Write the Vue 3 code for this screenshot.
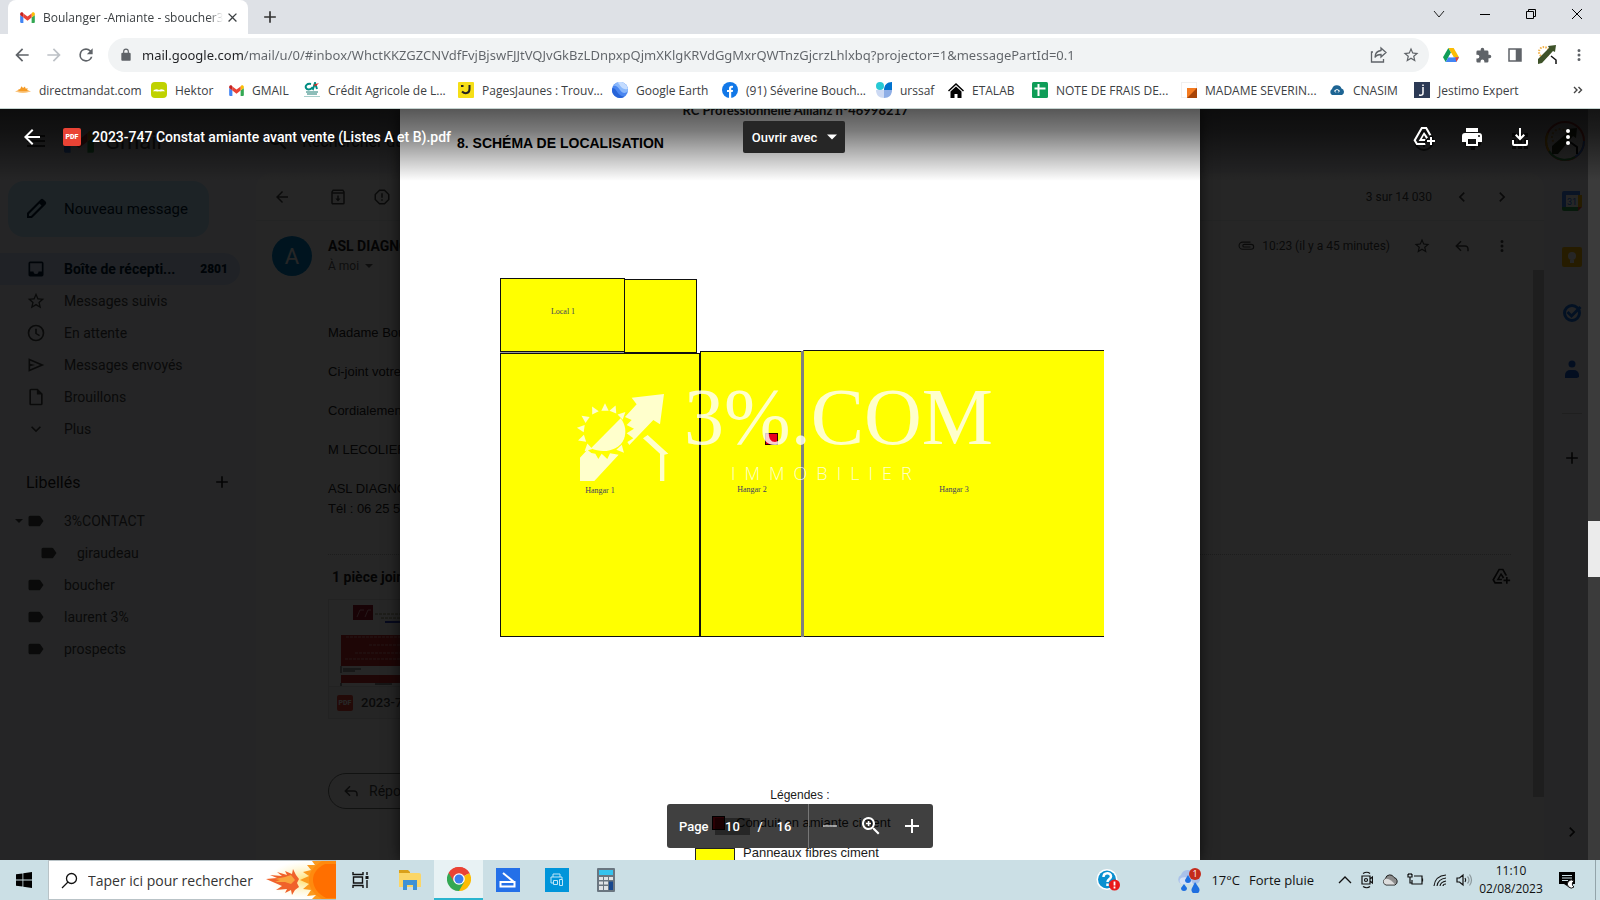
<script setup>
import { h, ref } from 'vue'

const paths = {
  back: 'M20 11H7.83l5.59-5.59L12 4l-8 8 8 8 1.41-1.41L7.83 13H20v-2z',
  forward: 'M12 4l-1.41 1.41L16.17 11H4v2h12.17l-5.58 5.59L12 20l8-8z',
  reload: 'M17.65 6.35A7.96 7.96 0 0 0 12 4a8 8 0 1 0 7.73 10h-2.08A6 6 0 1 1 12 6c1.66 0 3.14.69 4.22 1.78L13 11h7V4l-2.35 2.35z',
  lock: 'M18 8h-1V6A5 5 0 0 0 7 6v2H6a2 2 0 0 0-2 2v10c0 1.1.9 2 2 2h12a2 2 0 0 0 2-2V10a2 2 0 0 0-2-2zM9 6a3 3 0 0 1 6 0v2H9V6z',
  star: 'M22 9.24l-7.19-.62L12 2 9.19 8.63 2 9.24l5.46 4.73L5.82 21 12 17.27 18.18 21l-1.63-7.03L22 9.24zM12 15.4l-3.76 2.27 1-4.28-3.32-2.88 4.38-.38L12 6.1l1.71 4.04 4.38.38-3.32 2.88 1 4.28L12 15.4z',
  puzzle: 'M20.5 11H19V7a2 2 0 0 0-2-2h-4V3.500a2.500 2.500 0 0 0-5 0V5H4a2 2 0 0 0-2 2v3.800h1.500a2.700 2.700 0 0 1 0 5.400H2V20c0 1.100.9 2 2 2h3.800v-1.500a2.700 2.700 0 0 1 5.400 0V22H17a2 2 0 0 0 2-2v-4h1.500a2.500 2.500 0 0 0 0-5z',
  dots: 'M12 8a2 2 0 1 0 0-4 2 2 0 0 0 0 4zm0 2a2 2 0 1 0 0 4 2 2 0 0 0 0-4zm0 6a2 2 0 1 0 0 4 2 2 0 0 0 0-4z',
  close: 'M19 6.41L17.59 5 12 10.59 6.41 5 5 6.41 10.59 12 5 17.59 6.41 19 12 13.41 17.59 19 19 17.59 13.41 12z',
  plus: 'M19 13h-6v6h-2v-6H5v-2h6V5h2v6h6v2z',
  minus: 'M19 13H5v-2h14v2z',
  side: 'M3 3v18h18V3H3zm10 16H5V5h8v14z',
  print: 'M19 8H5a3 3 0 0 0-3 3v6h4v4h12v-4h4v-6a3 3 0 0 0-3-3zm-3 11H8v-5h8v5zm3-7a1 1 0 1 1 0-2 1 1 0 0 1 0 2zM18 3H6v4h12V3z',
  download: 'M13 3v8.600l2.600-2.600L17 10.400l-5 5-5-5L8.400 9l2.600 2.600V3h2zM4 15h2v4h12v-4h2v4a2 2 0 0 1-2 2H6a2 2 0 0 1-2-2v-4z',
  driveAdd: 'M9.200 2h5.600l4.700 8.200c-.8 0-1.500.2-2.200.4L13.600 4h-3.200L3.900 15.300 5.500 18H13c.1.700.3 1.400.6 2H4.300L1.500 15.300 9.200 2zM12 7l4 5.500c-.7.4-1.200.9-1.700 1.500L12 10.300 9.900 14h3.700c-.4.600-.6 1.300-.7 2H6.700L12 7zM20 12v3h3v2h-3v3h-2v-3h-3v-2h3v-3h2z',
  caret: 'M6 9l6 6 6-6z',
  pencil: 'M19.400 2.400a2 2 0 0 0-2.800 0L3 16v5h5L21.600 7.400a2 2 0 0 0 0-2.800l-2.200-2.200zM7 19H5v-2L15.500 6.500l2 2L7 19z',
  inbox: 'M19 3H5a2 2 0 0 0-2 2v14c0 1.100.9 2 2 2h14a2 2 0 0 0 2-2V5a2 2 0 0 0-2-2zm0 12h-4a3 3 0 0 1-6 0H5V5h14v10z',
  clock: 'M12 2a10 10 0 1 0 0 20 10 10 0 0 0 0-20zm0 18a8 8 0 1 1 0-16 8 8 0 0 1 0 16zm1-13h-2v6l4.800 3 .9-1.500L13 12.200V7z',
  send: 'M3 4v16l19-8L3 4zm2 3l11.850 5L5 17v-3.500l6-1.500-6-1.500V7z',
  file: 'M14 2H6a2 2 0 0 0-2 2v16c0 1.100.9 2 2 2h12a2 2 0 0 0 2-2V8l-6-6zm4 18H6V4h7v5h5v11z',
  down: 'M7.410 8.590L12 13.170l4.590-4.580L18 10l-6 6-6-6z',
  left: 'M15.410 7.410L14 6l-6 6 6 6 1.410-1.410L10.830 12z',
  right: 'M10 6L8.590 7.410 13.170 12l-4.580 4.590L10 18l6-6z',
  label: 'M16 5H4a2 2 0 0 0-2 2v10c0 1.100.9 2 2 2h12c.7 0 1.300-.3 1.600-.8L22 12l-4.400-6.200C17.300 5.300 16.700 5 16 5z',
  archive: 'M19 2H5L3 5v15c0 1.100.9 2 2 2h14a2 2 0 0 0 2-2V5l-2-3zM6 4h12l1 1.500H5L6 4zM5 20V7.500h14V20H5zm8-10h-2v4H8.500l3.500 4 3.500-4H13v-4z',
  spam: 'M8.300 2L2 8.300v7.400L8.300 22h7.400l6.300-6.300V8.300L15.700 2H8.300zM20 14.900L14.900 20H9.100L4 14.900V9.100L9.100 4h5.800L20 9.100v5.800zM11 7h2v6h-2V7zm0 8h2v2h-2v-2z',
  reply: 'M10 5L3 12l7 7 1.400-1.400L6.800 13H16c2 0 3 1.200 3 3v3h2v-3c0-3-2-5-5-5H6.800l4.600-4.600L10 5z',
  clip: 'M18 6H7.500a5.500 5.500 0 0 0 0 11H19a4 4 0 0 0 0-8H9.500a2.500 2.500 0 0 0 0 5H18v-1.500H9.500a1 1 0 0 1 0-2H19a2.500 2.500 0 0 1 0 5H7.500a4 4 0 0 1 0-8H18V6z',
  menu: 'M3 18h18v-2H3v2zm0-5h18v-2H3v2zm0-7v2h18V6H3z',
  search: 'M15.500 14h-.8l-.3-.3A6.500 6.500 0 1 0 13.700 14.400l.3.300v.8l5 5 1.500-1.500-5-5zm-6 0a4.500 4.500 0 1 1 0-9 4.500 4.500 0 0 1 0 9z',
  zoom: 'M15.500 14h-.8l-.3-.3A6.500 6.500 0 1 0 13.700 14.400l.3.300v.8l5 5 1.500-1.500-5-5zm-6 0a4.500 4.500 0 1 1 0-9 4.500 4.500 0 0 1 0 9zM10.300 7H8.700v1.700H7v1.600h1.700V12h1.600v-1.700H12V8.700h-1.700V7z',
  help: 'M12 2a10 10 0 1 0 0 20 10 10 0 0 0 0-20zm0 18a8 8 0 1 1 0-16 8 8 0 0 1 0 16zM11 16h2v2h-2zM12 6a4 4 0 0 0-4 4h2a2 2 0 1 1 4 0c0 2-3 2-3 5h2c0-2 3-2.500 3-5a4 4 0 0 0-4-4z',
  apps: 'M4 4h4v4H4zM10 4h4v4h-4zM16 4h4v4h-4zM4 10h4v4H4zM10 10h4v4h-4zM16 10h4v4h-4zM4 16h4v4H4zM10 16h4v4h-4zM16 16h4v4h-4z',
  gear: 'M19.400 13v-2l2-1.600-2-3.500-2.500 1a7 7 0 0 0-1.700-1L14.800 3h-4l-.5 2.900c-.6.2-1.200.6-1.700 1l-2.500-1-2 3.500L6.200 11v2l-2.100 1.600 2 3.500 2.500-1c.5.400 1.100.8 1.700 1l.5 2.900h4l.4-2.900c.6-.2 1.200-.6 1.700-1l2.500 1 2-3.500-2-1.600zM12.800 15.500a3.500 3.500 0 1 1 0-7 3.500 3.500 0 0 1 0 7z'
}
const Ico = (p) =>
  h('svg', { viewBox: '0 0 24 24', width: p.s, height: p.s, fill: 'currentColor', 'aria-hidden': 'true' }, [
    h('path', { d: paths[p.n] })
  ])
Ico.props = ['n', 's']

const GmailLogo = (p) =>
  h('svg', { viewBox: '0 0 32 24', width: p.s, height: Math.round(p.s * 0.75), 'aria-hidden': 'true' }, [
    h('path', { fill: '#4285f4', d: 'M2 24h5V12L0 6.500V22c0 1.100.9 2 2 2z' }),
    h('path', { fill: '#34a853', d: 'M25 24h5a2 2 0 0 0 2-2V6.500L25 12z' }),
    h('path', { fill: '#fbbc04', d: 'M25 3v9l7-5.500V4c0-3.500-4-4.500-6-2.500z' }),
    h('path', { fill: '#ea4335', d: 'M7 12V3l9 7 9-7v9l-9 7z' }),
    h('path', { fill: '#c5221f', d: 'M0 4v2.500L7 12V3L6 1.500C4-.5 0 .5 0 4z' })
  ])
GmailLogo.props = ['s']

const url = ref('mail.google.com/mail/u/0/#inbox/WhctKKZGZCNVdfFvjBjswFJJtVQJvGkBzLDnpxpQjmXKlgKRVdGgMxrQWTnzGjcrzLhlxbq?projector=1&messagePartId=0.1')
const pageNumber = ref('10')
const taskSearch = ref('')

const bookmarks = [
  { t: 'directmandat.com', k: 'sun' }, { t: 'Hektor', k: 'hektor' }, { t: 'GMAIL', k: 'gmail' },
  { t: 'Crédit Agricole de L...', k: 'ca' }, { t: 'PagesJaunes : Trouv...', k: 'pj' }, { t: 'Google Earth', k: 'earth' },
  { t: '(91) Séverine Bouch...', k: 'fb' }, { t: 'urssaf', k: 'urssaf' }, { t: 'ETALAB', k: 'house' },
  { t: 'NOTE DE FRAIS DE...', k: 'sheet' }, { t: 'MADAME SEVERIN...', k: 'orange' }, { t: 'CNASIM', k: 'cnasim' },
  { t: 'Jestimo Expert', k: 'jestimo' }
]
const folders = [
  { t: 'Boîte de récepti...', i: 'inbox', n: '2801' }, { t: 'Messages suivis', i: 'star' }, { t: 'En attente', i: 'clock' },
  { t: 'Messages envoyés', i: 'send' }, { t: 'Brouillons', i: 'file' }, { t: 'Plus', i: 'down' }
]
const labels = [
  { t: '3%CONTACT', open: true }, { t: 'giraudeau', sub: true }, { t: 'boucher' }, { t: 'laurent 3%' }, { t: 'prospects' }
]
const rays = [-134, -108, -82, -56, -27, 0, 22, 46, 138]
</script>

<template>
  <div class="screen">
    <header class="browser">
      <div class="tabs">
        <div class="tab">
          <GmailLogo s="15" />
          <span class="tab-title">Boulanger -Amiante - sboucher3p</span>
          <button class="plain" aria-label="Fermer l'onglet"><Ico n="close" s="15" /></button>
        </div>
        <button class="plain new-tab" aria-label="Nouvel onglet"><Ico n="plus" s="20" /></button>
        <div class="win">
          <button class="plain" aria-label="Onglets"><svg width="12" height="12" viewBox="0 0 12 12"><path d="M1 3l5 6 5-6" fill="none" stroke="#222" /></svg></button>
          <button class="plain" aria-label="Réduire"><svg width="12" height="12" viewBox="0 0 12 12"><path d="M1 6.500h10" stroke="#000" /></svg></button>
          <button class="plain" aria-label="Restaurer"><svg width="12" height="12" viewBox="0 0 12 12"><path d="M1.500 3.500h7v7h-7zM3.500 3.500v-2h7v7h-2" fill="none" stroke="#000" /></svg></button>
          <button class="plain" aria-label="Fermer"><svg width="12" height="12" viewBox="0 0 12 12"><path d="M1 1l10 10M11 1L1 11" stroke="#000" /></svg></button>
        </div>
      </div>
      <div class="nav">
        <button class="plain" aria-label="Précédent"><Ico n="back" s="20" /></button>
        <button class="plain off" aria-label="Suivant"><Ico n="forward" s="20" /></button>
        <button class="plain" aria-label="Actualiser"><Ico n="reload" s="20" /></button>
        <div class="omni">
          <Ico n="lock" s="14" />
          <input v-model="url" class="url" type="text" aria-label="Adresse" spellcheck="false" />
          <button class="plain" aria-label="Partager"><svg width="18" height="18" viewBox="0 0 18 18" fill="none" stroke="#5f6368" stroke-width="1.300"><path d="M3 6H1.500v10h12v-3" /><path d="M11 2l5 4.500L11 11V8.500c-3 0-5 1-6 3 0-4 2-6.500 6-7z" /></svg></button>
          <button class="plain" aria-label="Favori"><Ico n="star" s="18" /></button>
        </div>
        <div class="ext">
          <button class="plain" aria-label="Drive"><svg width="16" height="14" viewBox="0 0 30 26"><path d="M10 0h10l10 17H20z" fill="#fbbc04" /><path d="M10 0L0 17l5 9 10-17z" fill="#0f9d58" /><path d="M10 17h20l-5 9H5z" fill="#4285f4" /><path d="M23 17h7l-5 9z" fill="#ea4335" /><path d="M15 9l5 8H10z" fill="#fff" /></svg></button>
          <button class="plain" aria-label="Extensions"><Ico n="puzzle" s="17" /></button>
          <button class="plain" aria-label="Panneau latéral"><Ico n="side" s="18" /></button>
          <button class="plain" aria-label="Profil"><svg width="20" height="20" viewBox="0 0 20 20"><circle cx="7" cy="7" r="5" fill="none" stroke="#f2b24a" stroke-width="2" stroke-dasharray="1.500 1.200" /><path d="M1 19v-5L12 3l-1-2 8-1-1 7-2-1L5 18z" fill="#3e5229" /><path d="M14 11l5 4v4" fill="none" stroke="#111" stroke-width="1.500" /></svg></button>
          <button class="plain" aria-label="Menu"><Ico n="dots" s="18" /></button>
        </div>
      </div>
      <nav class="marks" aria-label="Favoris">
        <a v-for="b in bookmarks" :key="b.t" href="#" class="mark">
          <GmailLogo v-if="b.k === 'gmail'" s="15" />
          <svg v-else width="16" height="16" viewBox="0 0 16 16" aria-hidden="true">
            <g v-if="b.k === 'sun'" fill="#f59a23"><path d="M0 9.500l4-1.500-1-1 2 .3 1.500-3L8 6l2-1.500.5 2L13 6.500l-1 1.500 4 1.500-8 .3z" /><path d="M2 10.500l6-1 6 1-6 .6z" fill="#fbc77d" /></g>
            <g v-else-if="b.k === 'hektor'"><rect width="16" height="16" rx="4" fill="#bfd200" /><path d="M2 9.500C3 7 6 6.500 8 8c2-1.500 5-1 6 1.500-2-.5-4 .5-6-.3-2 .8-4-.2-6 .3z" fill="#fff" /></g>
            <g v-else-if="b.k === 'ca'"><path d="M7 2C3 1 1 4 2 6s4 2 6 0l1 1 2-6 2 6" fill="none" stroke="#008c82" stroke-width="2" /><path d="M9 3l6-2-3 3z" fill="#e2231a" /><path d="M2 10h12M3 12h10" stroke="#1c7c74" /><path d="M0 14.500h16" stroke="#a9cfcc" /></g>
            <g v-else-if="b.k === 'pj'"><rect width="16" height="16" rx="1" fill="#f6df17" /><path d="M3 4h2.500M11.500 3v4c0 5-5 5-7.500 2.500" fill="none" stroke="#222" stroke-width="2" /></g>
            <g v-else-if="b.k === 'earth'"><circle cx="8" cy="8" r="8" fill="#4a86f0" /><path d="M1 4C4 3 6 5 8 8s5 4 7.800 1.500A8 8 0 0 0 1 4z" fill="#8ab8fb" /><path d="M5 .6C8 2 8 5 11 6.500s4 .5 5 0A8 8 0 0 0 5 .6z" fill="#c4dcff" /><path d="M.3 6c3 0 4 3 6 5.500S12 15 13 14.200A8 8 0 0 1 .3 6z" fill="#2764d8" /></g>
            <g v-else-if="b.k === 'fb'"><circle cx="8" cy="8" r="8" fill="#1278e8" /><path d="M7 16v-6H5V8h2V6.500C7 4.500 8.300 3.500 11 4v1.800c-1.400-.2-1.800.2-1.800 1V8h1.900l-.4 2H9.200v6z" fill="#fff" /></g>
            <g v-else-if="b.k === 'urssaf'"><circle cx="4" cy="4" r="4" fill="#27c9d4" /><path d="M16 0v8H8c0-5 3-8 8-8z" fill="#0072ce" /><path d="M0 8h8v8c-5 0-8-3-8-8z" fill="#ccd9f3" /><path d="M8 8h8c0 5-3 8-8 8z" fill="#8eaee6" /></g>
            <g v-else-if="b.k === 'house'"><path d="M0 8.500L8 1l8 7.500-1 1L8 3 1 9.500z" /><path d="M2.500 9.500L8 4.500l5.500 5V16h-4v-4h-3v4h-4z" /></g>
            <g v-else-if="b.k === 'sheet'"><rect width="16" height="16" rx="1.500" fill="#0f9d58" /><path d="M6.500 2v12M2.500 6.500h11" stroke="#fff" stroke-width="2" /></g>
            <g v-else-if="b.k === 'orange'"><rect x=".5" y=".5" width="15" height="15" fill="#fff" stroke="#f0f0f0" /><path d="M6 6h10v10H6z" fill="#f47b20" /><path d="M16 6v10H6z" fill="#a84407" /></g>
            <g v-else-if="b.k === 'cnasim'"><path d="M3 13a3.500 3.500 0 0 1 0-6 5 5 0 0 1 9.500-.5A3.500 3.500 0 0 1 13 13z" fill="#1d6493" /><path d="M5 9c2-2.500 4-2.500 6 0-2 2.500-4 2.500-6 0z" fill="#fff" /><circle cx="8" cy="9.500" r="1.500" fill="#1d6493" /></g>
            <g v-else><rect width="16" height="16" fill="#2c3a55" /><path d="M9 5v6c0 2-1 2.500-4 2M9 2.500v1.500" fill="none" stroke="#fff" stroke-width="1.500" /></g>
          </svg>
          <span>{{ b.t }}</span>
        </a>
        <button class="plain more" aria-label="Autres favoris"><svg width="10" height="8" viewBox="0 0 10 8"><path d="M1 1l3 3-3 3M5.500 1l3 3-3 3" fill="none" stroke="#444" stroke-width="1.400" /></svg></button>
      </nav>
    </header>

    <main class="content">
      <div class="gmail">
        <div class="ghead">
          <span class="burger"><Ico n="menu" s="24" /></span>
          <GmailLogo s="30" />
          <span class="gname">Gmail</span>
          <div class="gsearch"><Ico n="search" s="24" /><span>Rechercher da</span></div>
          <span class="gtools"><Ico n="help" s="24" /><Ico n="gear" s="24" /><Ico n="apps" s="24" /></span>
          <svg class="gavatar" width="40" height="40" viewBox="0 0 40 40"><circle cx="20" cy="20" r="19" fill="#fff" stroke="#ea4335" stroke-width="2" /><path d="M39 20a19 19 0 0 1-9 16" fill="none" stroke="#4285f4" stroke-width="2" /><path d="M30 36A19 19 0 0 1 4 30" fill="none" stroke="#34a853" stroke-width="2" /><path d="M4 30A19 19 0 0 1 3 12" fill="none" stroke="#fbbc04" stroke-width="2" /><circle cx="15" cy="16" r="8" fill="none" stroke="#f2b24a" stroke-width="2" stroke-dasharray="2" /><path d="M7 33v-8L23 11l-2-3 11-1-1 10-3-2-15 18z" fill="#30401f" /><path d="M25 21l7 5v7" fill="none" stroke="#111" stroke-width="2" /></svg>
        </div>
        <div class="gbody">
          <aside class="side">
            <button class="plain compose"><Ico n="pencil" s="24" />Nouveau message</button>
            <a v-for="(f, i) in folders" :key="f.t" href="#" class="folder" :class="{ on: i === 0 }">
              <Ico :n="f.i" s="20" /><span>{{ f.t }}</span><b v-if="f.n">{{ f.n }}</b>
            </a>
            <div class="ltitle"><span>Libellés</span><Ico n="plus" s="20" /></div>
            <a v-for="l in labels" :key="l.t" href="#" class="folder lab" :class="{ sub: l.sub }">
              <span class="arrow"><Ico v-if="l.open" n="caret" s="16" /></span><Ico n="label" s="18" /><span>{{ l.t }}</span>
            </a>
          </aside>
          <section class="mail">
            <div class="mtools">
              <Ico n="back" s="18" /><Ico n="archive" s="18" class="arch" /><Ico n="spam" s="18" />
              <span class="grow"></span>
              <span class="count">3 sur 14 030</span><Ico n="left" s="20" /><Ico n="right" s="20" />
            </div>
            <div class="mbody">
              <article class="msg">
                <div class="mhead">
                  <span class="av">A</span>
                  <div class="from"><b>ASL DIAGNO</b><span>À moi <Ico n="caret" s="16" /></span></div>
                  <div class="meta"><Ico n="clip" s="18" /><span>10:23 (il y a 45 minutes)</span><Ico n="star" s="18" /><Ico n="reply" s="18" /><Ico n="dots" s="18" /></div>
                </div>
                <div class="text">
                  <p>Madame Boulan</p><p>Ci-joint votre</p><p>Cordialement</p><p>M LECOLIER</p><p>ASL DIAGNO<br />Tél : 06 25 5</p>
                </div>
                <div class="pj"><b>1 pièce jointe</b><Ico n="driveAdd" s="20" /></div>
                <div class="card">
                  <svg width="180" height="86" viewBox="0 0 180 86"><rect x="24" y="5" width="20" height="15" fill="#a3172c" /><path d="M28 17l3-7h4M36 17l3-7h3" stroke="#e9a0a8" fill="none" /><path d="M46 14h30M52 18h24" stroke="#8a8a60" stroke-dasharray="3 1" /><path d="M56 22h20" stroke="#2b3cc0" stroke-width="2" /><rect x="12" y="35" width="160" height="31" fill="#c92b2b" /><path d="M17 37h60M40 45h37M26 53h50M16 59h60" stroke="#e88f8f" stroke-dasharray="3 1" /><path d="M12 66v7M14 69h18M14 71h12" stroke="#444" /><rect x="12" y="75" width="160" height="8" fill="#c92b2b" /><path d="M12 83v3M46 84h17" stroke="#222" /></svg>
                  <div class="cname"><i class="pdf">PDF</i><span>2023-7</span></div>
                </div>
                <button class="plain answer"><Ico n="reply" s="18" />Répondre</button>
              </article>
              <div class="mscroll"></div>
            </div>
          </section>
          <aside class="rail">
            <svg width="20" height="20" viewBox="0 0 20 20"><path d="M0 2a2 2 0 0 1 2-2h16v4H4v12H0z" fill="#4285f4" /><path d="M16 4h4v12h-4z" fill="#fbbc04" /><path d="M0 16h16v4H2a2 2 0 0 1-2-2z" fill="#34a853" /><path d="M16 16h4l-4 4z" fill="#ea4335" /><path d="M4 4h12v12H4z" fill="#fff" /><text x="10" y="14" text-anchor="middle" font-size="9" fill="#1a73e8">31</text></svg>
            <svg width="20" height="20" viewBox="0 0 20 20"><rect width="20" height="20" rx="2" fill="#fbbc04" /><circle cx="10" cy="9" r="4" fill="#fff" /><path d="M8 13h4v3H8z" fill="#fff" /></svg>
            <svg width="20" height="20" viewBox="0 0 20 20"><circle cx="10" cy="10" r="7.500" fill="none" stroke="#1a73e8" stroke-width="3" /><path d="M5.500 9l4 4L18.500 4" fill="none" stroke="#1a73e8" stroke-width="3" /></svg>
            <svg width="20" height="20" viewBox="0 0 20 20"><circle cx="10" cy="5" r="3.500" fill="#1a5fd8" /><path d="M3 19v-3a5 5 0 0 1 5-5h4a5 5 0 0 1 5 5v2l-2 1z" fill="#1a5fd8" /></svg>
            <span class="sep"></span>
            <Ico n="plus" s="20" />
            <span class="grow"></span>
            <Ico n="right" s="20" />
          </aside>
        </div>
      </div>

      <div class="viewer">
        <article class="page">
          <p class="rc">RC Professionnelle Allianz n°46998217</p>
          <h1 class="h8">8. SCHÉMA DE LOCALISATION</h1>
          <svg class="plan" viewBox="0 0 800 634" role="img" aria-label="Schéma de localisation">
            <g fill="#ff0" stroke="#111" stroke-width="1">
              <rect x="100.500" y="126.500" width="124" height="73" /><rect x="224.500" y="127.500" width="72" height="73" />
              <rect x="100.500" y="201.500" width="199" height="283" /><rect x="300.500" y="199.500" width="101" height="285" />
              <path d="M704 198.500H403.500v286H704" />
            </g>
            <path d="M402.500 199v286" stroke="#808080" stroke-width="3" />
            <path d="M100 200.500h124" stroke="#999" />
            <rect x="365.500" y="281.500" width="12" height="11" fill="#e8001c" stroke="#300" />
            <g class="rooms"><text x="163" y="162">Local 1</text><text x="200" y="341">Hangar 1</text><text x="352" y="340">Hangar 2</text><text x="554" y="340">Hangar 3</text></g>
            <g fill="#fff" fill-opacity=".8">
              <g transform="translate(170 233) scale(.3333)">
                <path d="M30 288V218l22-24 12 10 12 2 9 16 10-16 17 16 8-17 26 4L73 288z" />
                <path d="M63 190L152 100c14 18 18 40 10 62-14 34-62 46-99 28z" />
                <path d="M165 96l35-38-15-20 97-11-12 91-20-13-72 75-6-9 18-11-20-15 22-14-22-11 15-15z" />
                <path d="M219 160l14-10 62 56-12 3v79h-13v-82z" />
                <path v-for="a in rays" :key="a" d="M94 77l11-22 11 22z" :transform="`rotate(${a} 105 140)`" />
              </g>
              <text class="brand" x="284" y="292">3%.COM</text>
              <text class="immo" x="331" y="328">IMMOBILIER</text>
            </g>
          </svg>
          <p class="leg">Légendes :</p>
          <p class="key k1"><i></i>Conduit en amiante ciment</p>
          <p class="key k2"><i></i>Panneaux fibres ciment</p>
        </article>
        <div class="vscroll"><span></span></div>
      </div>

      <div class="vhead">
        <button class="plain" aria-label="Retour"><Ico n="back" s="24" /></button>
        <i class="pdf big">PDF</i>
        <span class="fname">2023-747 Constat amiante avant vente (Listes A et B).pdf</span>
        <span class="vicons">
          <button class="plain" aria-label="Ajouter à Drive"><Ico n="driveAdd" s="24" /></button>
          <button class="plain" aria-label="Imprimer"><Ico n="print" s="24" /></button>
          <button class="plain" aria-label="Télécharger"><Ico n="download" s="24" /></button>
          <button class="plain" aria-label="Autres actions"><Ico n="dots" s="24" /></button>
        </span>
      </div>
      <button class="plain open">Ouvrir avec<Ico n="caret" s="20" /></button>
      <div class="pager">
        <label for="pg">Page</label>
        <input id="pg" v-model="pageNumber" type="text" />
        <span class="slash">/</span><span class="total">16</span>
        <span class="pzoom">
          <button class="plain dim" aria-label="Zoom arrière"><Ico n="minus" s="24" /></button>
          <button class="plain" aria-label="Ajuster"><Ico n="zoom" s="24" /></button>
          <button class="plain" aria-label="Zoom avant"><Ico n="plus" s="24" /></button>
        </span>
      </div>
    </main>

    <footer class="task">
      <button class="plain start" aria-label="Démarrer"><svg width="16" height="16" viewBox="0 0 16 16"><path d="M0 2.300l6.500-.9v6.200H0zM7.300 1.300L16 0v7.600H7.300zM0 8.400h6.500v6.200L0 13.700zM7.300 8.400H16V16l-8.700-1.200z" /></svg></button>
      <div class="tsearch">
        <svg width="17" height="17" viewBox="0 0 17 17" fill="none" stroke="#111" stroke-width="1.300"><circle cx="10.500" cy="6.500" r="5" /><path d="M7 10L1 16" /></svg>
        <input v-model="taskSearch" type="text" placeholder="Taper ici pour rechercher" aria-label="Taper ici pour rechercher" />
        <svg width="70" height="38" viewBox="0 0 70 38" aria-hidden="true">
          <defs><radialGradient id="glow"><stop offset="0" stop-color="#ffe070" /><stop offset="1" stop-color="#fff5c0" stop-opacity="0" /></radialGradient></defs>
          <ellipse cx="40" cy="19" rx="38" ry="19" fill="url(#glow)" />
          <path d="M0 18l11-1-7-3 12 1-5-4 10 3-2-4 7 3 1-5 3 6 3 4-2 4 2 4-4 3-3 5-1-5-6 3 2-4-11 1 6-4z" fill="#f0622a" />
          <path d="M9 18l10-2 6-2 4 5-4 4-6-2-10 0 5-2z" fill="#f9a43c" />
          <path d="M70 0H46l3 4-8 0 4 5-8 2 6 4-9 4 9 4-6 5 8 1-4 6 9-1-4 4h24z" fill="#fb9a1e" />
          <path d="M70 0H56C48 5 43 11 43 19s5 15 13 19h14z" fill="#ff8a0e" /><path d="M70 3H59c-8 4-12 9-12 16s5 14 13 18h10z" fill="#ff6f00" />
        </svg>
      </div>
      <button class="plain app" aria-label="Vue des tâches"><svg width="18" height="18" viewBox="0 0 18 18" fill="none" stroke="#111" stroke-width="1.400"><path d="M1 1v2.500h10V1M1 17v-2.500h10V17M1.500 6h9v6h-9zM15 1v3M15 9v8" /><path d="M13.500 5h3v3h-3z" fill="#111" stroke="none" /></svg></button>
      <button class="plain app" aria-label="Explorateur"><svg width="22" height="20" viewBox="0 0 22 20"><path d="M0 2V0h9l2 2v3H0z" fill="#d9a01a" /><path d="M0 3h20a2 2 0 0 1 2 2v12H0z" fill="#fbd667" /><path d="M4 10h14v10h-4v-5H8v5H4z" fill="#3e92d6" /></svg></button>
      <button class="plain app active" aria-label="Chrome"><svg width="24" height="24" viewBox="0 0 24 24"><path d="M12 12L1.600 6A12 12 0 0 1 22.400 6z" fill="#ea4335" /><path d="M12 12L22.400 6A12 12 0 0 1 12 24z" fill="#fbbc04" /><path d="M1.600 6A12 12 0 0 0 12 24l5.200-9L12 12z" fill="#34a853" /><path d="M12 6.500h10.700L22.400 6A12 12 0 0 0 1.600 6l5.600 9z" fill="#ea4335" /><circle cx="12" cy="12" r="5.800" fill="#fff" /><circle cx="12" cy="12" r="4.500" fill="#3b7ded" /></svg></button>
      <button class="plain app" aria-label="Numérisation"><svg width="24" height="24" viewBox="0 0 24 24"><rect width="24" height="24" fill="#2470e8" /><path d="M7 5l11 9" stroke="#fff" stroke-width="2" /><path d="M4.500 14h14v4.500h-14z" fill="none" stroke="#fff" stroke-width="2" /></svg></button>
      <button class="plain app" aria-label="Imprimante"><svg width="24" height="24" viewBox="0 0 24 24"><rect width="24" height="24" fill="#0095da" /><path d="M8 9V6h7v3M8 15H6V9h11v2M8.500 12.500h4v4h-4zM14.500 11.500h3v6h-3z" fill="none" stroke="#bfe6f8" /></svg></button>
      <button class="plain app" aria-label="Calculatrice"><svg width="18" height="24" viewBox="0 0 18 24"><rect width="18" height="24" rx="1" fill="#6a7680" /><path d="M2 2h14v5H2z" fill="#35c3ee" /><g fill="#dfe3e6"><path d="M2 9h4v3H2zM7 9h4v3H7zM12 9h4v3h-4zM2 13.500h4v3H2zM7 13.500h4v3H7zM2 18h4v4H2zM7 18h4v4H7z" /></g><path d="M12 13.500h4V22h-4z" fill="#17488e" /></svg></button>
      <span class="grow"></span>
      <svg class="assist" width="24" height="22" viewBox="0 0 24 22"><circle cx="11" cy="10.500" r="10.500" fill="#fff" /><circle cx="11" cy="10.500" r="9" fill="#0a90d0" /><path d="M7.500 8c0-5 7.500-5 7.500-.5C15 10 11.500 10 11.500 13M11.500 14.500v2.500" fill="none" stroke="#fff" stroke-width="2.500" /><circle cx="18.500" cy="16" r="5.500" fill="#e81a1a" /><path d="M18.500 12.500v4M18.500 17.500v2" stroke="#fff" stroke-width="1.800" /></svg>
      <button class="plain weather">
        <svg width="26" height="26" viewBox="0 0 26 26"><path d="M5 17a5 5 0 0 1 0-9 7 7 0 0 1 13-1 5 5 0 0 1 2 10z" fill="#a9c1ea" /><path d="M5 17a4 4 0 0 1 0-6c4-2 10 0 12 6z" fill="#d3e0f6" /><path d="M12 8l3 5a3 3 0 1 1-6 0zM8 17l3 4a3 3 0 1 1-6 0zM19 15l4 6a4 4 0 1 1-7 0z" fill="#1f6fe0" /><circle cx="19" cy="7" r="6" fill="#c42b1c" /><text x="19" y="10" font-size="9" text-anchor="middle" fill="#fff">1</text></svg>
        <span>17°C</span><span>Forte pluie</span>
      </button>
      <div class="tray">
        <svg width="14" height="18" viewBox="0 0 14 18" fill="none" stroke="#111" stroke-width="1.300"><path d="M1 12l6-6 6 6" /></svg>
        <svg width="12" height="18" viewBox="0 0 12 18" fill="none" stroke="#111" stroke-width="1.200"><path d="M2 2.500q4-2.500 7 0M2 15.500q4 2.500 7 0M1 5h8v8H1zM9 8l2.500-2v6L9 10" /><circle cx="5" cy="9" r="1.500" /></svg>
        <svg width="16" height="18" viewBox="0 0 16 18"><path d="M4 14a3.500 3.500 0 0 1-.5-6.500A4.500 4.500 0 0 1 12 6.500 4 4 0 0 1 13 14z" fill="#8c8c8c" stroke="#222" /><path d="M4 13.500A3 3 0 0 1 3 8c4-1 7 2 10 5.500z" fill="#ddd" /></svg>
        <svg width="17" height="18" viewBox="0 0 17 18" fill="none" stroke="#111" stroke-width="1.200"><path d="M7 5h8v8H5V9M15.500 7.500v3M1 3v3h4V3M2 2v2M4 2v2M3 6v6h2" /></svg>
        <svg width="14" height="18" viewBox="0 0 14 18" fill="none" stroke="#111" stroke-width="1.100"><path d="M1 15Q2 5 13 4M4 15q1-7 9-8M7 15q.5-4 6-5M10 15q0-2 3-2" /></svg>
        <svg width="17" height="18" viewBox="0 0 17 18" fill="none" stroke="#111" stroke-width="1.200"><path d="M1 7v4h2.500L7 14V4L3.500 7zM9 7q1.500 2 0 4" /><path d="M11.500 5.500q3 3.500 0 7M13.500 3.500q4 5.500 0 11" stroke="#8b979b" /></svg>
      </div>
      <div class="time"><span>11:10</span><span>02/08/2023</span></div>
      <svg class="notif" width="16" height="17" viewBox="0 0 16 17"><path d="M0 0h16v12h-3l-2 4-6-4H0z" /><path d="M3 3.500h10M3 6h10M3 8.500h6" stroke="#cbdfe5" /><path d="M15 9a4 4 0 1 0 0 6 3.500 3.500 0 0 1 0-6z" fill="#fff" stroke="#111" /></svg>
      <span class="desk"></span>
    </footer>
  </div>
</template>

<style>
html, body { margin: 0; overflow: hidden; }
</style>
<style scoped>
.screen { height: 100vh; display: flex; flex-direction: column; font-family: "Open Sans", "Noto Sans", sans-serif; font-size: 12px; color: #3c4043; }
.screen *, .screen *::before { box-sizing: border-box; }
svg { flex: none; display: block; }
p { margin: 0; }
a { color: inherit; text-decoration: none; }
.plain { background: none; border: 0; padding: 0; margin: 0; font: inherit; color: inherit; display: flex; align-items: center; justify-content: center; flex: none; }
.grow { flex: 1; }

.tabs { height: 34px; background: #dee1e6; display: flex; align-items: center; padding-left: 8px; }
.tab { width: 240px; height: 34px; background: #fff; border-radius: 8px 8px 0 0; display: flex; align-items: center; gap: 8px; padding: 0 8px 0 12px; }
.tab-title { flex: 1; overflow: hidden; white-space: nowrap; font-size: 12px; mask-image: linear-gradient(to right, #000 92%, transparent); }
.tab .plain { margin-left: -6px; }
.new-tab { width: 44px; color: #333; }
.win { margin-left: auto; display: flex; align-self: stretch; }
.win .plain { width: 46px; height: 28px; }
.nav { height: 42px; background: #fff; display: flex; align-items: center; padding: 0 5px 0 12px; color: #5f6368; gap: 12px; }
.nav > .off { color: #bdc1c6; }
.nav > .ext { margin-left: -6px; }
.omni { flex: 1; height: 34px; border-radius: 17px; background: #f1f3f4; display: flex; align-items: center; padding: 0 9px 0 11px; gap: 14px; }
.url { flex: 1; min-width: 0; height: 24px; border: 0; padding: 0; margin-left: -5px; outline: 0; font: 13px "Noto Sans", "Open Sans", sans-serif; color: transparent; background: linear-gradient(to right, #202124 102px, #5f6368 102px); background-clip: text; -webkit-background-clip: text; }
.ext { display: flex; }
.ext .plain { width: 32px; }
.marks { height: 33px; background: #fff; border-bottom: 1px solid #c4d3d0; padding: 0 0 4px 15px; display: grid; grid-template-columns: 136fr 78fr 75fr 154fr 154fr 110fr 154fr 72fr 84fr 149fr 148fr 85fr 140fr 46fr; align-items: center; }
.mark { display: flex; align-items: center; gap: 8px; white-space: nowrap; min-width: 0; }
.more { justify-self: end; margin-right: 17px; }

.content { flex: 1; min-height: 0; position: relative; overflow: hidden; background: #f6f8fc; }
.gmail { height: 100%; display: flex; flex-direction: column; font-family: Roboto, "Open Sans", sans-serif; font-size: 14px; color: #444746; }
.gmail::after { content: ""; position: absolute; inset: 0; background: rgba(0, 0, 0, .85); }
.ghead { height: 64px; display: flex; align-items: center; padding: 0 15px 0 24px; flex: none; }
.burger { width: 40px; }
.gname { font-size: 22px; margin-left: 11px; width: 161px; }
.gsearch { flex: 1; display: flex; gap: 12px; align-items: center; font-size: 16px; }
.gtools { display: flex; gap: 24px; margin-right: 13px; }
.gbody { flex: 1; min-height: 0; display: flex; }
.side { width: 256px; flex: none; padding-top: 8px; }
.compose { margin: 0 0 16px 8px; width: 201px; height: 56px; border-radius: 16px; background: #c2e7ff; color: #001d35; justify-content: flex-start; padding-left: 16px; gap: 16px; font-size: 15px; }
.folder { display: flex; align-items: center; height: 32px; width: 240px; padding: 0 12px 0 26px; gap: 18px; font-size: 14px; white-space: nowrap; border-radius: 0 16px 16px 0; }
.folder.on { background: #d3e3fd; color: #001d35; font-weight: 700; }
.folder b { margin-left: auto; font-size: 12px; }
.ltitle { margin: 20px 0 6px; height: 34px; display: flex; align-items: center; justify-content: space-between; padding: 0 24px 0 26px; font-size: 16px; color: #1f1f1f; }
.lab { padding-left: 11px; gap: 19px; color: #444746; }
.lab .arrow { width: 16px; margin-right: -19px; }
.lab.sub { padding-left: 24px; }
.mail { flex: 1; min-width: 0; background: #fff; border-radius: 16px 16px 0 0; display: flex; flex-direction: column; }
.mtools { height: 48px; border-bottom: 1px solid #eceff1; display: flex; align-items: center; padding: 0 32px 0 17px; gap: 20px; }
.arch { margin: 0 6px 0 18px; }
.count { font-size: 12px; }
.mbody { flex: 1; min-height: 0; display: flex; }
.msg { flex: 1; padding: 15px 22px 0 16px; min-width: 0; }
.mhead { display: flex; gap: 16px; height: 87px; }
.av { width: 40px; height: 40px; border-radius: 50%; background: #0288d1; color: #fff; display: grid; place-items: center; font-size: 22px; }
.from { display: flex; flex-direction: column; color: #1f1f1f; }
.from b { line-height: 20px; }
.from span { display: flex; gap: 2px; font-size: 12px; line-height: 20px; color: #5e5e5e; align-items: center; }
.meta { margin-left: auto; display: flex; gap: 22px; height: 20px; align-items: center; font-size: 12px; }
.meta span { margin: 0 1px 0 -15px; }
.text { margin-left: 56px; padding-bottom: 35px; border-bottom: 1px dotted #bbb; color: #222; font: 13px/20px "Liberation Sans", sans-serif; }
.text p + p { margin-top: 19px; }
.pj { margin-left: 56px; height: 44px; display: flex; align-items: center; justify-content: space-between; padding-left: 4px; font-size: 14px; color: #1f1f1f; }
.card { margin-left: 56px; width: 182px; border: 1px solid #e0e0e0; }
.cname { height: 32px; border-top: 1px solid #e0e0e0; display: flex; align-items: center; gap: 8px; padding-left: 8px; font-weight: 500; font-size: 13px; background: #f8f8f8; }
.pdf { width: 16px; height: 16px; border-radius: 2px; background: #ea4335; color: #fff; font: 900 7px/16px Roboto, sans-serif; text-align: center; flex: none; }
.answer { margin: 54px 0 0 56px; width: 130px; height: 36px; border: 1px solid #747775; border-radius: 18px; gap: 9px; justify-content: flex-start; padding-left: 13px; font-size: 14px; }
.mscroll { width: 11px; background: #c9c9c9; margin: 49px 0 63px; }
.rail { width: 56px; flex: none; display: flex; flex-direction: column; align-items: center; gap: 36px; padding: 18px 0 18px; color: #1f1f1f; }
.sep { width: 20px; height: 1px; background: #ccc; margin: -2px 0; }

.viewer { position: absolute; inset: 0; }
.page { width: 50%; height: 100%; margin: 0 auto; background: #fff; color: #1a1a1a; box-shadow: 0 0 14px rgba(0, 0, 0, .7); overflow: hidden; font-family: "Liberation Sans", sans-serif; display: flow-root; }
.rc { margin: -7px 0 0; text-align: center; font: 700 13px/16px Lato, sans-serif; padding-right: 9px; }
.h8 { margin: 16px 0 0 57px; font-size: 14px; line-height: 18px; font-weight: 700; color: #000; }
.plan { width: 100%; }
.rooms text { font: 8px "Liberation Serif", serif; fill: #3c3c60; text-anchor: middle; }
.brand { font: 80px "Liberation Serif", serif; }
.immo { font: 300 18px "Open Sans", sans-serif; letter-spacing: 9px; }
.leg { text-align: center; font-size: 12px; line-height: 18px; }
.key { display: flex; align-items: center; font-size: 13px; line-height: 18px; }
.k1 { margin: 10px 0 0 312px; gap: 11px; }
.k1 i { width: 13px; height: 14px; background: #b00010; border: 1px solid #000; }
.k2 { margin: 12px 0 0 295px; gap: 8px; }
.k2 i { width: 40px; height: 30px; margin: 4px 0 -16px; background: #ff0; border: 1px solid #222; }
.vscroll { position: absolute; top: 0; right: 0; bottom: 0; width: 12px; background: #3b3b3b; padding-top: 412px; }
.vscroll span { display: block; height: 56px; background: #ebebeb; }
.vhead { position: absolute; top: 0; left: 0; right: 0; height: 72px; background: linear-gradient(to bottom, rgba(0, 0, 0, .66), rgba(0, 0, 0, .52) 30%, transparent); display: flex; align-items: center; padding: 0 20px 16px; color: #fff; font: 500 14px Roboto, sans-serif; }
.pdf.big { width: 18px; height: 18px; line-height: 18px; margin: 0 11px 0 19px; }
.fname { font-size: 14px; font-weight: 500; white-space: nowrap; }
.vicons { margin-left: auto; display: flex; gap: 24px; }
.open { position: absolute; top: 12px; left: 50%; margin-left: -57px; width: 102px; height: 32px; background: #262626; border-radius: 2px; color: #fff; font: 500 13px Roboto, sans-serif; gap: 5px; padding-left: 6px; }
.pager { position: absolute; bottom: 12px; left: 50%; margin-left: -133px; width: 266px; height: 44px; border-radius: 3px; background: rgba(0, 0, 0, .75); display: flex; align-items: center; color: #fff; font: 500 13px Roboto, sans-serif; padding-left: 12px; }
.pager label { width: 36px; }
.pager input { width: 35px; height: 17px; padding: 0; border: 0; background: rgba(0, 0, 0, .4); color: #fff; font: inherit; text-align: center; }
.slash { width: 20px; text-align: center; }
.total { width: 38px; padding-right: 10px; text-align: center; }
.pzoom { flex: 1; align-self: stretch; display: flex; justify-content: space-around; border-left: 1px solid #777; }
.dim { opacity: .55; }

.task { height: 40px; background: #cbdfe5; display: flex; align-items: center; flex: none; color: #111; }
.start { width: 48px; height: 40px; }
.tsearch { width: 288px; height: 40px; background: #fff; border: 1px solid #b9c3c7; display: flex; align-items: center; padding-left: 12px; overflow: hidden; border-right: 0; }
.tsearch input { flex: 1; min-width: 0; border: 0; outline: 0; padding: 0 0 0 10px; font: 14px "Open Sans", "Noto Sans", sans-serif; background: none; }
.tsearch input::placeholder { color: #333; opacity: 1; }
.app { width: 49px; height: 40px; }
.app.active { background: #e8f2f4; border-bottom: 2px solid #2bb5cf; }
.weather { font-size: 13px; gap: 9px; margin-right: 24px; margin-left: 56px; }
.tray { display: flex; gap: 9px; align-items: center; }
.time { width: 76px; display: flex; flex-direction: column; text-align: center; font-size: 12px; line-height: 18px; }
.notif { margin: 0 20px 0 10px; }
.desk { width: 5px; height: 40px; border-left: 1px solid #93a4aa; }
</style>
